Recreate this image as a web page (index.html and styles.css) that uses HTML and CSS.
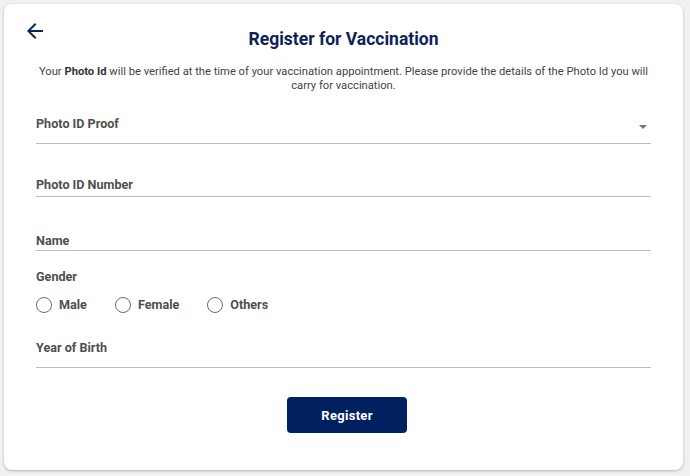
FILE: index.html
```html
<!DOCTYPE html>
<html lang="en">
<head>
<meta charset="utf-8">
<title>Register for Vaccination</title>
<link rel="stylesheet" href="styles.css">
</head>
<body>
<div class="card">
  <div class="header">
    <button class="back" aria-label="Back">
      <svg viewBox="0 0 24 24" width="24" height="24"><path d="M20 11H7.83l5.59-5.59L12 4l-8 8 8 8 1.41-1.41L7.83 13H20v-2z" fill="#0d2256"/></svg>
    </button>
    <h1 class="title">Register for Vaccination</h1>
    <span></span>
  </div>
  <p class="desc">Your <b>Photo Id</b> will be verified at the time of your vaccination appointment. Please provide the details of the Photo Id you will<br>carry for vaccination.</p>
  <div class="field field-proof">
    <span class="label">Photo ID Proof</span>
    <span class="caret"></span>
  </div>
  <div class="field field-number">
    <span class="label">Photo ID Number</span>
  </div>
  <div class="field field-name">
    <span class="label">Name</span>
  </div>
  <div class="gender-label label">Gender</div>
  <div class="radios">
    <label class="radio"><span class="circle"></span>Male</label>
    <label class="radio"><span class="circle"></span>Female</label>
    <label class="radio"><span class="circle"></span>Others</label>
  </div>
  <div class="field field-year">
    <span class="label">Year of Birth</span>
  </div>
  <div class="actions">
    <button class="submit">Register</button>
  </div>
</div>
</body>
</html>
```
FILE: styles.css
```css
* { box-sizing: border-box; }
html, body { margin: 0; padding: 0; }
body {
  background: #f1f1f1;
  font-family: Roboto, "Liberation Sans", Arial, sans-serif;
  width: 690px;
  height: 476px;
  padding: 4px 7px 6px 4px;
}
.card {
  background: #fff;
  border-radius: 8px;
  box-shadow: 0 1px 3px rgba(0,0,0,0.25);
  height: 466px;
  padding: 15px 32px 0 32px;
}
.header {
  display: grid;
  grid-template-columns: 1fr auto 1fr;
  align-items: start;
}
.back {
  border: 0;
  background: none;
  padding: 0;
  margin: 0 0 0 -13px;
  width: 24px;
  height: 24px;
  justify-self: start;
  display: block;
  cursor: pointer;
}
.back svg { display: block; }
.title {
  margin: 9px 0 0 0;
  font-size: 17.5px;
  line-height: 22px;
  font-weight: 700;
  color: #0d2256;
}
.desc {
  margin: 15px 0 0 0;
  text-align: center;
  font-size: 11.2px;
  line-height: 14px;
  color: #444;
}
.desc b { color: #333; }
.label {
  font-size: 12.6px;
  line-height: 16px;
  font-weight: 700;
  color: #4f4f4f;
}
.field {
  border-bottom: 1px solid #bdbdbd;
  display: flex;
  align-items: center;
  justify-content: space-between;
}
.field-proof { margin-top: 23px; padding-bottom: 11px; }
.field-number { margin-top: 33px; padding-bottom: 3px; }
.field-name { margin-top: 36px; padding-bottom: 1px; }
.field-year { margin-top: 27px; padding-bottom: 11px; }
.caret {
  width: 0;
  height: 0;
  border-left: 4px solid transparent;
  border-right: 4px solid transparent;
  border-top: 4px solid #757575;
  margin: 5px 4px 0 0;
}
.gender-label { margin-top: 18px; }
.radios {
  display: flex;
  margin-top: 12px;
  gap: 28px;
}
.radio {
  display: flex;
  align-items: center;
  gap: 7px;
  font-size: 12.6px;
  line-height: 16px;
  font-weight: 700;
  color: #4f4f4f;
}
.circle {
  width: 16px;
  height: 16px;
  border: 1.5px solid #6b6b6b;
  border-radius: 50%;
}
.actions {
  display: flex;
  justify-content: center;
  margin-top: 29px;
}
.submit {
  margin-left: 7px;
  width: 120px;
  height: 36px;
  border: 0;
  border-radius: 4px;
  background: #002060;
  color: #fff;
  font-family: Roboto, "Liberation Sans", Arial, sans-serif;
  font-size: 13px;
  font-weight: 700;
  letter-spacing: 0.3px;
  cursor: pointer;
}
```
